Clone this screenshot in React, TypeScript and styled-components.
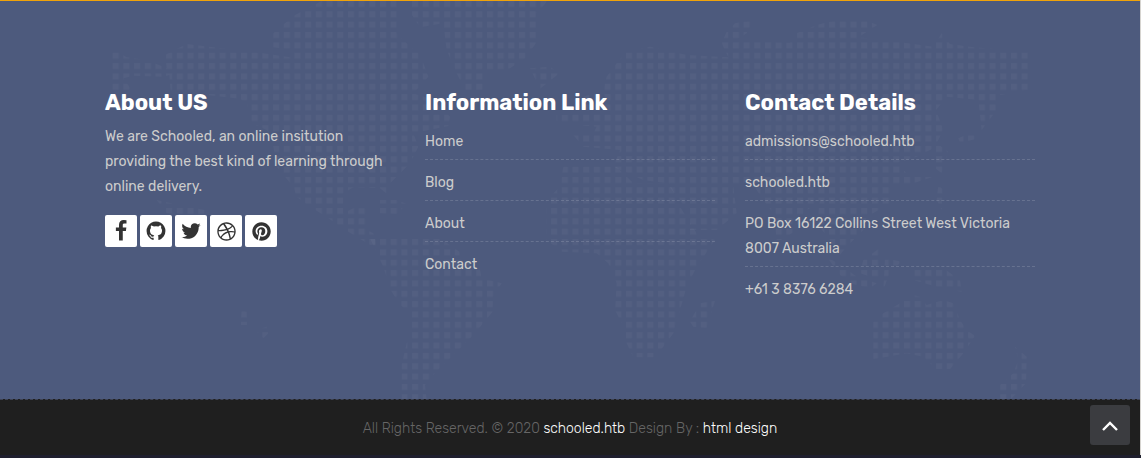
import React from "react";
import styled, { createGlobalStyle } from "styled-components";
import { FaDribbble, FaPinterest } from "react-icons/fa";

const GlobalStyle = createGlobalStyle`
  *, *::before, *::after { box-sizing: border-box; }
  body {
    margin: 0;
    background: #1f1f2e;
    font-family: Rubik, Roboto, "Liberation Sans", sans-serif;
    font-size: 14px;
    line-height: 25px;
    color: #cccccc;
  }
`;

const Page = styled.div`
  border-right: 1px solid #d6d4d0;
`;

const Footer = styled.footer`
  position: relative;
  overflow: hidden;
  padding: 89px 0 96px;
  border-top: 1px solid #f0a30a;
  background: #4d5a7d;
`;

const MapArt = styled.svg`
  position: absolute;
  top: -1px;
  left: 50%;
  width: 1140px;
  height: 400px;
  transform: translateX(-50%);
`;

const Columns = styled.div`
  position: relative;
  display: grid;
  grid-template-columns: repeat(3, 1fr);
  gap: 30px;
  max-width: 960px;
  margin: 0 auto;
  padding: 0 15px;
`;

const Title = styled.h3`
  margin: 0 0 8px;
  font-size: 22px;
  line-height: 26px;
  font-weight: 700;
  color: #ffffff;
`;

const Intro = styled.p`
  margin: 0 0 16px;
`;

const SocialList = styled.ul`
  display: flex;
  gap: 3px;
  margin: 0;
  padding: 0;
  list-style: none;
`;

const SocialLink = styled.a`
  display: flex;
  align-items: center;
  justify-content: center;
  width: 32px;
  height: 32px;
  border-radius: 2px;
  background: #ffffff;
  color: #333333;
`;

const LinkList = styled.ul`
  margin: 0;
  padding: 5px 0 0;
  list-style: none;
`;

const LinkItem = styled.li`
  padding-bottom: 5px;
  margin-bottom: 10px;
  border-bottom: 1px dashed rgba(255, 255, 255, 0.15);

  &:last-child {
    padding-bottom: 1px;
    margin-bottom: 0;
    border-bottom: 0;
  }
`;

const TextLink = styled.a`
  color: inherit;
  text-decoration: none;
`;

const Copyright = styled.div`
  padding: 16px 15px 14px;
  border-top: 1px dashed #3e4355;
  background: #1f1f1f;
  color: #666666;
  font-size: 14px;
  font-weight: 300;
  text-align: center;
`;

const CopyrightLink = styled.a`
  color: #ffffff;
  text-decoration: none;
`;

const TopButton = styled.button`
  position: fixed;
  right: 11px;
  bottom: 13px;
  display: flex;
  align-items: center;
  justify-content: center;
  width: 40px;
  height: 40px;
  padding: 2px 0 0;
  border: 0;
  border-radius: 3px;
  background: #3b3c40;
  color: #ffffff;
  cursor: pointer;
`;

const land = [
  // North America
  "970,0 880,48 820,100 820,142 880,150 870,172 790,160 640,142 560,132 495,165 500,205 440,180 380,172 335,145 335,270 395,270 370,235 400,227 490,230 508,225 512,275 620,285 720,296 740,310 755,370 800,390 820,440 830,500 880,560 890,590 915,610 985,655 1015,675 1045,695 1110,735 1130,735 1120,700 1100,690 1105,625 1060,625 1030,640 1030,580 1060,562 1140,565 1165,585 1160,560 1190,530 1220,500 1240,470 1255,440 1240,400 1345,378 1350,350 1300,300 1240,280 1285,230 1270,190 1255,160 1220,130 1190,100 1190,0",
  // Greenland
  "1236,0 1645,0 1610,40 1608,130 1575,175 1530,205 1460,220 1450,270 1395,270 1370,220 1340,150 1330,70 1260,82 1236,45",
  // Caribbean and Iceland
  "1140,600 1190,600 1220,612 1190,642 1140,640",
  "1590,205 1650,200 1678,220 1620,266",
  // South America
  "1110,715 1320,715 1378,755 1380,775 1440,810 1445,835 1505,850 1480,890 1478,935 1445,975 1415,1010 1385,1040 1355,1070 1325,1098 1300,1125 1275,1155 1280,1200 1205,1200 1205,1095 1220,1030 1235,1000 1235,940 1200,915 1172,870 1150,800",
  // Europe and Asia
  "1880,155 1950,140 2060,165 2185,172 2165,130 2180,95 2205,70 2260,60 2240,100 2200,125 2280,125 2370,128 2390,100 2450,75 2500,62 2600,62 2632,75 2575,112 2670,122 2800,140 2825,100 2850,132 2920,142 3085,155 3085,270 3000,285 2990,330 2945,390 2935,300 2840,290 2808,330 2830,390 2810,430 2845,455 2825,520 2800,500 2800,445 2750,470 2690,490 2720,520 2800,530 2740,550 2672,560 2672,610 2600,650 2590,690 2540,740 2515,770 2490,720 2450,670 2460,600 2410,640 2390,690 2345,720 2330,720 2320,640 2290,600 2250,540 2200,560 2210,640 2150,690 2070,690 2070,640 2000,550 1930,540 1840,500 1860,450 1750,440 1720,405 1780,400 1790,380 1670,370 1670,345 1770,340 1720,300 1810,270 1820,230 1850,190",
  // Africa
  "1690,500 1850,500 1900,550 2010,550 2040,620 2090,700 2145,720 2090,800 2060,860 2040,930 2020,1000 1990,1040 1960,1072 1900,1072 1880,1030 1870,980 1845,930 1850,850 1825,790 1790,760 1685,755 1640,720 1640,600 1680,560",
  "2145,902 2120,985 2080,980 2070,965 2100,910",
  // Japan
  "2875,415 2910,400 2938,415 2880,428",
  "2815,555 2830,570 2825,630 2810,600",
  // South-east Asia
  "2480,770 2530,800 2570,830 2630,850 2610,865 2550,850 2520,825",
  "2590,780 2645,740 2640,840 2580,820",
  "2655,775 2705,785 2670,815 2650,870",
  "2740,805 2830,805 2880,840 2885,875 2810,860 2740,840",
  // Australia
  "2740,885 2760,890 2780,915 2830,900 2860,910 2880,960 2900,990 2925,1008 2890,1060 2850,1108 2810,1108 2770,1070 2720,1060 2620,1078 2620,965 2650,940 2700,910",
  // New Zealand
  "3045,1040 3080,1070 3078,1150 3030,1200 3000,1200 3000,1155 3040,1120 3055,1080",
  // Pacific islands
  "725,930 740,935 742,975 722,975",
  "765,990 800,980 805,1000 790,1015",
  "470,600 560,620 615,630 615,645 500,640",
];

const WorldMap = () => (
  <MapArt viewBox="0 0 3420 1200" aria-hidden="true">
    <defs>
      <pattern id="dots" x="338" y="34" width="32.08" height="31.05" patternUnits="userSpaceOnUse">
        <rect width="18" height="18" fill="#ffffff" fillOpacity="0.03" />
      </pattern>
    </defs>
    {land.map((points) => (
      <polygon key={points} points={points} fill="url(#dots)" />
    ))}
  </MapArt>
);

const brandIcon = (path: string) => () => (
  <svg width="22" height="22" viewBox="0 0 1792 1792" fill="currentColor">
    <path d={path} />
  </svg>
);

const FacebookIcon = brandIcon(
  "M1343 12v264h-157q-86 0-116 36t-30 108v189h293l-39 296h-254v759h-306v-759h-255v-296h255v-218q0-186 104-288.500t277-102.500q147 0 228 12z"
);

const GithubIcon = brandIcon(
  "M896 128q209 0 385.500 103t279.500 279.500 103 385.500q0 251-146.500 451.500t-378.500 277.500q-27 5-40-7t-13-30q0-3 .5-76.500t.5-134.500q0-97-52-142 57-6 102.500-18t94-39 81-66.500 53-105 20.500-150.500q0-119-79-206 37-91-8-204-28-9-81 11t-92 44l-38 24q-93-26-192-26t-192 26q-16-11-42.500-27t-83.500-38.500-85-13.500q-45 113-8 204-79 87-79 206 0 85 20.500 150t52.500 105 80.500 67 94 39 102.500 18q-39 36-49 103-21 10-45 15t-57 5-65.500-21.500-55.500-62.500q-19-32-48.500-52t-49.500-24l-20-3q-21 0-29 4.500t-5 11.500 9 14 13 12l7 5q22 10 43.500 38t31.500 51l10 23q13 38 44 61.500t67 30 69.500 7 55.500-3.500l23-4q0 38 .5 88.500t.5 54.500q0 18-13 30t-40 7q-232-77-378.500-277.500t-146.500-451.500q0-209 103-385.500t279.500-279.500 385.500-103z"
);

const TwitterIcon = brandIcon(
  "M1684 408q-67 98-162 167 1 14 1 42 0 130-38 259.500t-115.500 248.500-184.500 210.500-258 146-323 54.500q-271 0-496-145 35 4 78 4 225 0 401-138-105-2-188-64.500t-114-159.500q33 5 61 5 43 0 85-11-112-23-185.500-111.500t-73.500-205.500v-4q68 38 146 41-66-44-105-115t-39-154q0-88 44-163 121 149 294.500 238.500t371.500 99.500q-8-38-8-74 0-134 94.500-228.500t228.500-94.500q140 0 236 102 109-21 205-78-37 115-142 178 93-10 186-50z"
);

const socials = [
  { label: "Facebook", icon: <FacebookIcon /> },
  { label: "GitHub", icon: <GithubIcon /> },
  { label: "Twitter", icon: <TwitterIcon /> },
  { label: "Dribbble", icon: <FaDribbble size={19} /> },
  { label: "Pinterest", icon: <FaPinterest size={19} /> },
];

const pages = ["Home", "Blog", "About", "Contact"];

export default function App() {
  return (
    <Page>
      <GlobalStyle />
      <Footer>
        <WorldMap />
        <Columns>
          <section>
            <Title>About US</Title>
            <Intro>
              We are Schooled, an online insitution providing the best kind of learning through
              online delivery.
            </Intro>
            <SocialList>
              {socials.map(({ label, icon }) => (
                <li key={label}>
                  <SocialLink href="#" aria-label={label}>
                    {icon}
                  </SocialLink>
                </li>
              ))}
            </SocialList>
          </section>
          <section>
            <Title>Information Link</Title>
            <LinkList>
              {pages.map((page) => (
                <LinkItem key={page}>
                  <TextLink href="#">{page}</TextLink>
                </LinkItem>
              ))}
            </LinkList>
          </section>
          <section>
            <Title>Contact Details</Title>
            <LinkList>
              <LinkItem>
                <TextLink href="mailto:admissions@schooled.htb">admissions@schooled.htb</TextLink>
              </LinkItem>
              <LinkItem>
                <TextLink href="#">schooled.htb</TextLink>
              </LinkItem>
              <LinkItem>PO Box 16122 Collins Street West Victoria 8007 Australia</LinkItem>
              <LinkItem>+61 3 8376 6284</LinkItem>
            </LinkList>
          </section>
        </Columns>
      </Footer>
      <Copyright>
        All Rights Reserved. © 2020 <CopyrightLink href="#">schooled.htb</CopyrightLink> Design By :{" "}
        <CopyrightLink href="#">html design</CopyrightLink>
      </Copyright>
      <TopButton type="button" aria-label="Back to top">
        <svg width="18" height="12" viewBox="0 0 18 12" fill="none" stroke="currentColor" strokeWidth="2.4">
          <path d="M2 10 9 3l7 7" />
        </svg>
      </TopButton>
    </Page>
  );
}
